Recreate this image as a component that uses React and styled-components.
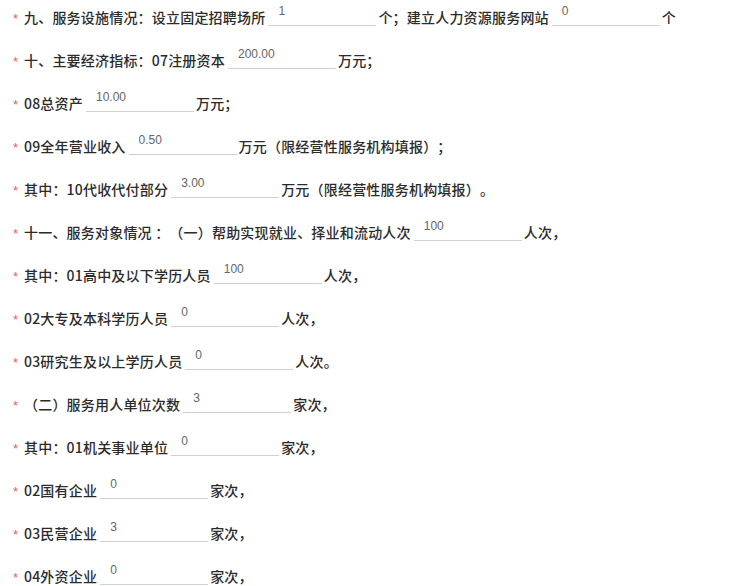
import styled, { createGlobalStyle } from 'styled-components';

const rows = [
    [['九、服务设施情况：设立固定招聘场所', '1'], ['个；建立人力资源服务网站', '0'], ['个']],
    [['十、主要经济指标：07注册资本', '200.00'], ['万元；']],
    [['08总资产', '10.00'], ['万元；']],
    [['09全年营业收入', '0.50'], ['万元（限经营性服务机构填报）；']],
    [['其中：10代收代付部分', '3.00'], ['万元（限经营性服务机构填报）。']],
    [['十一、服务对象情况 ：（一）帮助实现就业、择业和流动人次', '100'], ['人次，']],
    [['其中：01高中及以下学历人员', '100'], ['人次，']],
    [['02大专及本科学历人员', '0'], ['人次，']],
    [['03研究生及以上学历人员', '0'], ['人次。']],
    [['（二）服务用人单位次数', '3'], ['家次，']],
    [['其中：01机关事业单位', '0'], ['家次，']],
    [['02国有企业', '0'], ['家次，']],
    [['03民营企业', '3'], ['家次，']],
    [['04外资企业', '0'], ['家次，']],
];

const App = () => {
    return (
        <>
            <GlobalStyle />
            <Form>
                {rows.map((parts, i) => (
                    <Row key={i}>
                        <Star>*</Star>
                        {parts.map(([text, value], j) => (
                            <Part key={j}>
                                <Label>{text}</Label>
                                {value !== undefined && <Field defaultValue={value} />}
                            </Part>
                        ))}
                    </Row>
                ))}
            </Form>
        </>
    );
};

const GlobalStyle = createGlobalStyle`
    body {
        margin: 0;
        background: #fff;
        font-family: "Noto Sans CJK SC", "Liberation Sans", sans-serif;
    }
`;

const Form = styled.div`
    padding: 0 0 0 12px;
    height: 586px;
    overflow: hidden;
`;

const Row = styled.div`
    display: flex;
    align-items: flex-end;
    height: 26px;
    margin-bottom: 17px;
    white-space: nowrap;
`;

const Star = styled.span`
    color: #f25a5a;
    font-family: "Liberation Sans", sans-serif;
    font-size: 13px;
    line-height: 18px;
    width: 11px;
    padding-left: 1px;
    position: relative;
    top: 2px;
`;

const Part = styled.div`
    display: flex;
    align-items: flex-end;
`;

const Label = styled.span`
    font-size: 14px;
    font-weight: 500;
    letter-spacing: 0.2px;
    line-height: 18px;
    color: #2b2b2b;
    text-spacing-trim: space-all;
`;

const Field = styled.input`
    box-sizing: border-box;
    width: 108px;
    height: 24px;
    margin: 0 2px 0 3px;
    padding: 0 0 6px 10px;
    border: none;
    border-bottom: 1px solid #d0d0d0;
    outline: none;
    background: transparent;
    font-family: "Liberation Sans", sans-serif;
    font-size: 12px;
    color: #666;
`;

export default App;
